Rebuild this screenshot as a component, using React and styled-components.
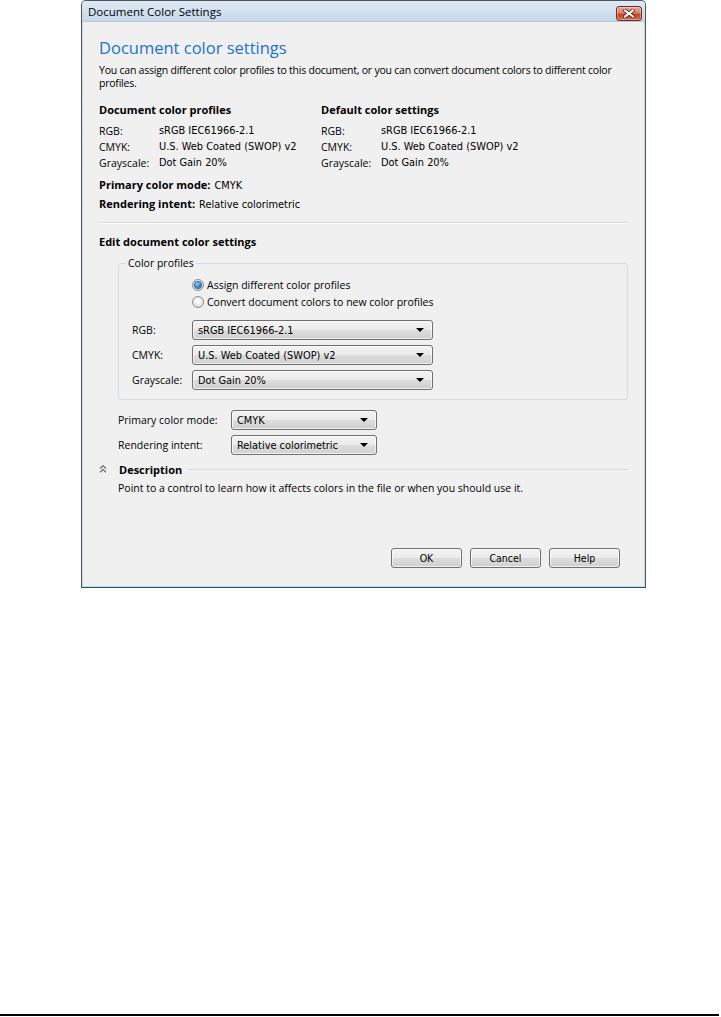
import React from "react";
import styled, { createGlobalStyle } from "styled-components";

const Global = createGlobalStyle`
  html, body { margin: 0; padding: 0; background: #ffffff; }
  body { font-family: "Open Sans", "Noto Sans", sans-serif; color: #000; }
  * { box-sizing: border-box; }
`;

const UI = `"Open Sans", "Noto Sans", sans-serif`;
const TAH = `"DejaVu Sans Condensed", "DejaVu Sans", sans-serif`;

const Page = styled.div`
  width: 721px;
  height: 1017px;
  display: flex;
  flex-direction: column;
`;

const Dialog = styled.div`
  margin-left: 81px;
  width: 565px;
  height: 588px;
  border: 1px solid #4b5660;
  border-bottom-color: #1e5a6a;
  border-radius: 5px 5px 0 0;
  background: #f0f0f0;
  box-shadow: inset 0 0 0 1px #c6d9eb;
  display: flex;
  flex-direction: column;
  overflow: hidden;
`;

const TitleBar = styled.div`
  height: 21px;
  flex: none;
  display: flex;
  align-items: center;
  justify-content: space-between;
  padding: 0 3px 0 6px;
  background: linear-gradient(#dfe9f4, #c6d8ea);
  border-bottom: 1px solid #b6c8da;
  font-family: ${UI};
  font-size: 11.5px;
`;

const CloseButton = styled.div`
  width: 26px;
  height: 15px;
  margin-top: 4px;
  border: 1px solid #6b2b20;
  border-radius: 3px;
  background: linear-gradient(#e7a896 0%, #d7846e 45%, #c4452a 55%, #d0694c 100%);
  box-shadow: inset 0 0 0 1px rgba(255, 255, 255, 0.35);
  display: flex;
  align-items: center;
  justify-content: center;
`;

const Body = styled.div`
  flex: 1;
  display: flex;
  flex-direction: column;
  padding: 16px 17px 19px 17px;
  font-family: ${UI};
  font-size: 11px;
`;

const Heading = styled.h1`
  margin: 0;
  font-family: ${UI};
  font-weight: 400;
  font-size: 16.5px;
  line-height: 20px;
  color: #2272cf;
`;

const Intro = styled.p`
  margin: 6px 0 0 0;
  font-size: 10.5px;
  line-height: 13px;
  letter-spacing: -0.22px;
`;

const Columns = styled.div`
  display: grid;
  grid-template-columns: 222px 1fr;
  margin-top: 13px;
`;

const SectionTitle = styled.div`
  font-weight: 700;
  font-size: 11px;
  line-height: 14px;
  margin-top: ${(p) => p.$top || 0}px;
`;

const ProfileGrid = styled.div`
  display: grid;
  grid-template-columns: 60px 1fr;
  margin-top: 6px;
  font-size: 10.5px;
  line-height: 16px;
`;

const Value = styled.span`
  font-family: ${TAH};
  font-weight: 400;
  font-size: 10.9px;
`;

const ModeList = styled.div`
  margin-top: 5px;
  display: flex;
  flex-direction: column;
`;

const ModeRow = styled.div`
  display: flex;
  align-items: baseline;
  gap: 4px;
  line-height: 18px;
  font-weight: 700;
  font-size: 11px;
`;

const Separator = styled.div`
  height: 1px;
  margin-top: 8px;
  background: #d8d8d8;
  box-shadow: 0 1px 0 #ffffff;
`;

const Group = styled.fieldset`
  margin: 8px 0 0 19px;
  padding: 7px 0 9px 13px;
  border: 1px solid #d3dde4;
  border-radius: 3px;
  min-width: 0;
`;

const Legend = styled.legend`
  margin-left: -6px;
  padding: 0 2px;
  font-size: 10.5px;
  line-height: 12px;
`;

const RadioList = styled.div`
  display: flex;
  flex-direction: column;
  padding-left: 60px;
`;

const RadioRow = styled.label`
  display: flex;
  align-items: center;
  gap: 3px;
  height: 17px;
  font-size: 10.5px;
`;

const RadioCircle = styled.span`
  width: 12px;
  height: 12px;
  border-radius: 50%;
  border: 1px solid #8b8d8f;
  background: radial-gradient(circle at 50% 40%, #ffffff, #d8d8d8);
  display: flex;
  align-items: center;
  justify-content: center;
  &::after {
    content: "";
    display: ${(p) => (p.$checked ? "block" : "none")};
    width: 6px;
    height: 6px;
    border-radius: 50%;
    background: radial-gradient(circle at 40% 35%, #9ad6f7, #2a79c0 60%, #16579a);
    box-shadow: 0 0 0 1px #2f6aa5;
  }
`;

const FieldGrid = styled.div`
  display: grid;
  grid-template-columns: ${(p) => p.$label}px ${(p) => p.$field}px;
  row-gap: 5px;
  align-items: center;
  margin-top: ${(p) => p.$top}px;
  margin-left: ${(p) => p.$left || 0}px;
  font-size: 10.5px;
`;

const Select = styled.div`
  height: 20px;
  border: 1px solid #707070;
  border-radius: 3px;
  background: linear-gradient(#f3f3f3 0%, #ebebeb 48%, #dddddd 52%, #d0d0d0 100%);
  box-shadow: inset 0 0 0 1px rgba(255, 255, 255, 0.7);
  display: flex;
  align-items: center;
  justify-content: space-between;
  padding: 0 8px 0 5px;
  font-family: ${TAH};
  font-size: 10.9px;
`;

const Arrow = styled.span`
  width: 0;
  height: 0;
  border-left: 4px solid transparent;
  border-right: 4px solid transparent;
  border-top: 4px solid #000;
`;

const DescHeader = styled.div`
  display: flex;
  align-items: center;
  margin-top: 7px;
  height: 14px;
`;

const DescTitle = styled.span`
  margin-left: 12px;
  font-weight: 700;
  font-size: 11px;
`;

const DescLine = styled.span`
  flex: 1;
  height: 1px;
  margin-left: 6px;
  background: #dcdcdc;
`;

const DescText = styled.div`
  margin: 5px 0 0 19px;
  font-size: 10.5px;
  line-height: 14px;
`;

const Footer = styled.div`
  margin-top: auto;
  display: flex;
  justify-content: flex-end;
  gap: 8px;
  padding-right: 8px;
`;

const Button = styled.button`
  width: 71px;
  height: 20px;
  padding: 0;
  border: 1px solid #707070;
  border-radius: 3px;
  background: linear-gradient(#f3f3f3 0%, #ebebeb 48%, #dddddd 52%, #cfcfcf 100%);
  box-shadow: inset 0 0 0 1px rgba(255, 255, 255, 0.7);
  font-family: ${TAH};
  font-size: 10.5px;
  color: #000;
`;

const BottomRule = styled.div`
  margin-top: auto;
  margin-bottom: 1px;
  width: 719px;
  height: 2px;
  background: #000;
`;

const CloseGlyph = () => (
  <svg width="12" height="9" viewBox="0 0 12 9">
    <path d="M2 1.5 L10 7.5 M10 1.5 L2 7.5" stroke="#5b1e14" strokeWidth="3.6" strokeLinecap="square" />
    <path d="M2 1.5 L10 7.5 M10 1.5 L2 7.5" stroke="#ffffff" strokeWidth="2" strokeLinecap="square" />
  </svg>
);

const Chevrons = () => (
  <svg width="8" height="8" viewBox="0 0 8 8">
    <path d="M1 3.5 L4 0.8 L7 3.5 M1 7.2 L4 4.5 L7 7.2" fill="none" stroke="#7a7a7a" strokeWidth="1.5" />
  </svg>
);

const profiles = [
  ["RGB:", "sRGB IEC61966-2.1"],
  ["CMYK:", "U.S. Web Coated (SWOP) v2"],
  ["Grayscale:", "Dot Gain 20%"],
];

const ProfileBlock = ({ title }) => (
  <div>
    <SectionTitle>{title}</SectionTitle>
    <ProfileGrid>
      {profiles.map(([k, v]) => (
        <React.Fragment key={k}>
          <span>{k}</span>
          <Value>{v}</Value>
        </React.Fragment>
      ))}
    </ProfileGrid>
  </div>
);

const Dropdown = ({ value }) => (
  <Select>
    <span>{value}</span>
    <Arrow />
  </Select>
);

export default function App() {
  return (
    <Page>
      <Global />
      <Dialog>
        <TitleBar>
          <span>Document Color Settings</span>
          <CloseButton>
            <CloseGlyph />
          </CloseButton>
        </TitleBar>
        <Body>
          <Heading>Document color settings</Heading>
          <Intro>
            You can assign different color profiles to this document, or you can convert document colors to different color
            profiles.
          </Intro>
          <Columns>
            <ProfileBlock title="Document color profiles" />
            <ProfileBlock title="Default color settings" />
          </Columns>
          <ModeList>
            <ModeRow>
              Primary color mode: <Value>CMYK</Value>
            </ModeRow>
            <ModeRow>
              Rendering intent: <Value>Relative colorimetric</Value>
            </ModeRow>
          </ModeList>
          <Separator />
          <SectionTitle $top={12}>Edit document color settings</SectionTitle>
          <Group>
            <Legend>Color profiles</Legend>
            <RadioList>
              <RadioRow>
                <RadioCircle $checked />
                Assign different color profiles
              </RadioRow>
              <RadioRow>
                <RadioCircle />
                Convert document colors to new color profiles
              </RadioRow>
            </RadioList>
            <FieldGrid $label={60} $field={241} $top={10}>
              <span>RGB:</span>
              <Dropdown value="sRGB IEC61966-2.1" />
              <span>CMYK:</span>
              <Dropdown value="U.S. Web Coated (SWOP) v2" />
              <span>Grayscale:</span>
              <Dropdown value="Dot Gain 20%" />
            </FieldGrid>
          </Group>
          <FieldGrid $label={113} $field={146} $top={10} $left={19}>
            <span>Primary color mode:</span>
            <Dropdown value="CMYK" />
            <span>Rendering intent:</span>
            <Dropdown value="Relative colorimetric" />
          </FieldGrid>
          <DescHeader>
            <Chevrons />
            <DescTitle>Description</DescTitle>
            <DescLine />
          </DescHeader>
          <DescText>Point to a control to learn how it affects colors in the file or when you should use it.</DescText>
          <Footer>
            <Button>OK</Button>
            <Button>Cancel</Button>
            <Button>Help</Button>
          </Footer>
        </Body>
      </Dialog>
      <BottomRule />
    </Page>
  );
}
